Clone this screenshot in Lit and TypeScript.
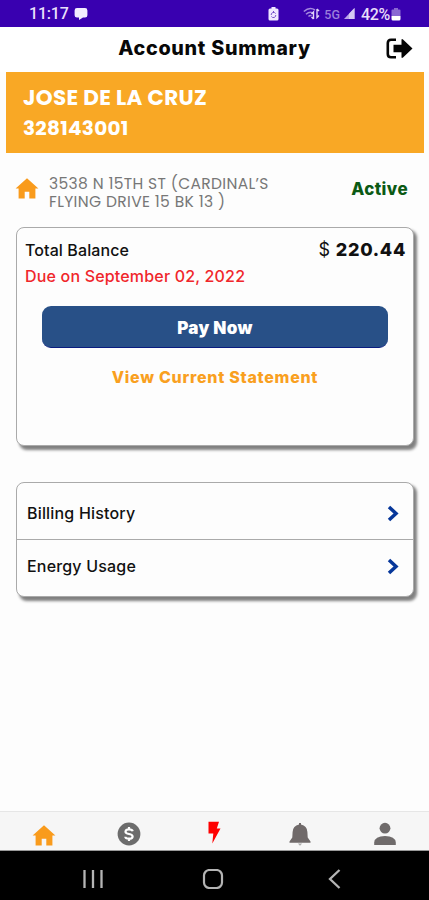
import { LitElement, html, css, svg } from "lit";
import { customElement } from "lit/decorators.js";

const homeShape = svg`<path d="M12 2.2 0.6 12.6h3V22.6h6.1v-6.8h4.6v6.8h6.1V12.6h3Z"/>`;

@customElement("status-bar")
class StatusBar extends LitElement {
  static styles = css`
    :host { display: flex; height: 26.5px; background: #3900b0; color: #e8defa; align-items: center;
      font-family: Roboto, sans-serif; box-sizing: border-box; padding: 2px 28px 0 29px; }
    .time { font-size: 16px; line-height: 24px; font-weight: 500; width: 39px; letter-spacing: -0.2px; white-space: nowrap; }
    .chat { margin-left: 6px; }
    .spacer { flex: 1; }
    .saver { margin-right: 24px; }
    .net { font-size: 12.5px; font-weight: 500; color: #9b7edb; margin: 1px 4px 0 4px; }
    .pct { font-size: 16px; font-weight: 500; margin: 0 1px 0 6px; letter-spacing: -0.3px; }
    svg { display: block; flex: none; }
  `;
  render() {
    return html`
      <span class="time">11:17</span>
      <svg class="chat" width="14" height="14" viewBox="0 0 14 14" fill="#f3edff"><path d="M3 1h8q2.4 0 2.4 2.4v4.800Q13.400 10.600 11 10.600H9L5 13V10.600H3Q.6 10.600 .6 8.200V3.400Q.6 1 3 1Z"/></svg>
      <span class="spacer"></span>
      <svg class="saver" width="11" height="14" viewBox="0 0 11 14"><path d="M3.500 0h4v1.500H9q1.500 0 1.500 1.500v9q0 1.500-1.500 1.500H2Q.5 13.500.5 12V3Q.5 1.500 2 1.500h1.500Z" fill="#efe7ff"/><path d="M3.200 8a2.400 2.400 0 0 1 4.400-1.500M7.800 8a2.400 2.400 0 0 1-4.400 1.500M5.500 4v2" fill="none" stroke="#7550c9"/></svg>
      <svg width="17" height="14" viewBox="0 0 17 14" fill="none"><path d="M.8 4.500Q6.500-.5 12 3M3 7.200Q6.500 4 9.500 5.800M5.500 9.500Q7 8 8.500 9" stroke="#a488df" stroke-width="1.500"/><path d="M10.500 12V5L8.500 7M14 2v8.500l2-2M10.500 12l-2-2M14 2l2 2" stroke="#e0d4f8" stroke-width="1.400"/></svg>
      <span class="net">5G</span>
      <svg width="11" height="12" viewBox="0 0 11 12"><path d="M0 11 10.500 0V11Z" fill="#b9a3e8"/><path d="M5 5.800 10.500 0V11H5Z" fill="#d7c9f4"/></svg>
      <span class="pct">42%</span>
      <svg width="10" height="13" viewBox="0 0 10 13"><path d="M3 0h4v1.500h1.500q1 0 1 1V8H.5V2.500q0-1 1-1H3Z" fill="#8a68d2"/><path d="M.5 8h9v3q0 1.500-1.500 1.500H2Q.5 12.500.5 11Z" fill="#fff"/></svg>
    `;
  }
}

@customElement("tab-bar")
class TabBar extends LitElement {
  static styles = css`
    :host { display: grid; grid-template-columns: repeat(5, 1fr); height: 40px; box-sizing: border-box;
      background: #f6f6f6; border-top: 1px solid #e6e6e6; border-bottom: 1px solid #999; padding: 0 1px 0 1px; }
    .tab { display: flex; justify-content: center; align-items: center; padding-top: 6px; }
    .tab:first-child { padding-top: 7px; }
    svg { display: block; }
  `;
  render() {
    return html`
      <div class="tab"><svg width="24" height="24" viewBox="0 0 24 24" fill="#f99b1c">${homeShape}</svg></div>
      <div class="tab"><svg width="24" height="24" viewBox="0 0 24 24"><circle cx="12" cy="12" r="11.400" fill="#6c6c6c"/><path d="M15.700 9.300Q15.200 7.400 12 7.400T8.500 9.700Q8.500 11.300 12 12T15.600 14.400Q15.600 16.700 12 16.700T8.300 14.700M12 5v2.400M12 16.700V19" fill="none" stroke="#fff" stroke-width="2.200"/></svg></div>
      <div class="tab"><svg width="24" height="26" viewBox="0 0 24 26" fill="#fe0000"><path d="M6.500 .8H17L14.800 7.400H18.500L10.300 22.500 11.300 12.400H6.500Z"/></svg></div>
      <div class="tab"><svg width="24" height="24" viewBox="0 0 24 24" fill="#706a6a"><path d="M11 1h2v1.600Q19 3.800 19.400 10L19.700 15.500 22.500 19.500V20.800H1.500V19.500L4.300 15.500 4.600 10Q5 3.800 11 2.600Z"/><path d="M9.800 21.500h4.400L12 23.700Z" fill="#aaa"/></svg></div>
      <div class="tab"><svg width="24" height="24" viewBox="0 0 24 24" fill="#6f6b6b"><circle cx="12" cy="6.200" r="5.400"/><path d="M1.200 23V20.500Q1.800 14 12 14T22.800 20.500V23Z"/></svg></div>
    `;
  }
}

@customElement("app-root")
class AppRoot extends LitElement {
  static styles = css`
    :host { display: flex; flex-direction: column; height: 900px; background: #fdfdfd; color: #111;
      font-family: Inter, "Liberation Sans", sans-serif; overflow: hidden; white-space: nowrap; }
    svg { display: block; flex: none; }
    .header { height: 45.500px; background: #fff; display: grid; grid-template-columns: 1fr auto 1fr; align-items: center; }
    .title { grid-column: 2; font-size: 19.800px; line-height: 26px; font-weight: 800; color: #080808; padding-bottom: 2px; letter-spacing: 0.700px; }
    .exit { justify-self: end; margin-right: 16px; padding-bottom: 2px; }
    .banner { margin: 0 5px 0 6px; height: 81px; box-sizing: border-box; background: #f9a825; color: #fff;
      padding: 11px 17px; font-family: Poppins, Inter, sans-serif; font-weight: 700; line-height: 30px; }
    .name { font-size: 21.500px; letter-spacing: 0.300px; }
    .acct { font-size: 20px; letter-spacing: 0.250px; }
    .place { display: flex; height: 74px; box-sizing: border-box; padding: 21px 21px 0 15px; }
    .house { margin-top: 2px; }
    .addr { margin-left: 10px; padding-top: 1px; font-family: Poppins, Inter, sans-serif; font-size: 15.500px; color: #777; flex: 1; letter-spacing: 0.350px; }
    .addr div { line-height: 18px; }
    .active { font-size: 17px; line-height: 24px; font-weight: 800; color: #0b5a14; padding-top: 3px; letter-spacing: 0.400px; }
    .card { margin: 0 15px 0 16px; box-sizing: border-box; border: 1px solid #aaa; border-radius: 8px; background: #fdfdfd;
      box-shadow: 3px 3.500px 3px #808080; flex: none; }
    .balance { height: 219px; padding: 9px 8px 0; display: flex; flex-direction: column; }
    .row { display: flex; justify-content: space-between; line-height: 26px; font-size: 16px; }
    .label { font-weight: 500; letter-spacing: 0.100px; }
    .sum { font-size: 18px; letter-spacing: 0.300px; margin-right: -1px; }
    .sum b { font-weight: 800; letter-spacing: 0.700px; }
    .due { font-size: 16px; line-height: 26px; color: #f0262b; font-weight: 500; letter-spacing: 0.180px; }
    .pay { margin: 17px 17px 0; height: 42px; box-sizing: border-box; border: 0; border-bottom: 1px solid #0a1c80; border-radius: 9px;
      background: #285087; color: #fff; font: 900 17px/26px Inter, sans-serif; padding: 2px 0 0; letter-spacing: 0.350px; }
    .view { text-align: center; font-size: 16px; line-height: 26px; font-weight: 850; color: #f9a01f; margin-top: 16px; letter-spacing: 0.720px; }
    .links { margin-top: 36px; height: 115px; }
    .link { display: flex; height: 56px; align-items: center; justify-content: space-between; padding: 5px 14px 0 10px; box-sizing: border-box;
      font-size: 16px; font-weight: 500; letter-spacing: 0.180px; }
    .link span { padding-bottom: 1.500px; }
    .link + .link { border-top: 1px solid #aaa; padding-top: 0; padding-bottom: 3px; }
    .link + .link span { padding-bottom: 0; }
    .fill { flex: 1; }
    .sysnav { height: 49px; background: #000; display: flex; align-items: center; padding: 7px 0 0 82px; box-sizing: border-box; }
    .homekey { margin-left: 98px; }
    .backkey { margin-left: 104px; }
  `;
  private chevron() {
    return html`<svg width="12" height="17" viewBox="0 0 12 17"><path d="M2 2 9 8.500 2 15" fill="none" stroke="#07379a" stroke-width="3.500"/></svg>`;
  }
  render() {
    return html`
      <status-bar></status-bar>
      <div class="header">
        <div class="title">Account Summary</div>
        <svg class="exit" width="27" height="21" viewBox="0 0 27 21"><path d="M10 1.800H5Q1.800 1.800 1.800 5v11Q1.800 19.200 5 19.200h5" fill="none" stroke="#050505" stroke-width="2.600"/><path d="M7.500 6.700H15.500V2Q15.500 .3 17 1.400L26.500 10.500 17 19.600Q15.500 20.700 15.500 19V14.300H7.500Z" fill="#050505"/></svg>
      </div>
      <div class="banner"><div class="name">JOSE DE LA CRUZ</div><div class="acct">328143001</div></div>
      <div class="place">
        <svg class="house" width="24" height="24" viewBox="0 0 24 24" fill="#f99b1c">${homeShape}</svg>
        <div class="addr"><div>3538 N 15TH ST (CARDINAL’S</div><div>FLYING DRIVE 15 BK 13 )</div></div>
        <div class="active">Active</div>
      </div>
      <div class="card balance">
        <div class="row"><span class="label">Total Balance</span><span class="sum">$ <b>220.44</b></span></div>
        <div class="due">Due on September 02, 2022</div>
        <button class="pay">Pay Now</button>
        <div class="view">View Current Statement</div>
      </div>
      <div class="card links">
        <div class="link"><span>Billing History</span>${this.chevron()}</div>
        <div class="link"><span>Energy Usage</span>${this.chevron()}</div>
      </div>
      <div class="fill"></div>
      <tab-bar></tab-bar>
      <div class="sysnav">
        <svg width="22" height="20" viewBox="0 0 22 20"><path d="M2.500 1v18M11 1v18M19.500 1v18" stroke="#b4b4b4" stroke-width="2.300"/></svg>
        <svg class="homekey" width="22" height="20" viewBox="0 0 22 20"><rect x="2" y="1" width="18" height="18" rx="5.500" fill="none" stroke="#b4b4b4" stroke-width="2.200"/></svg>
        <svg class="backkey" width="13" height="20" viewBox="0 0 13 20"><path d="M11.500 1 2 10l9.500 9" fill="none" stroke="#b4b4b4" stroke-width="2.300"/></svg>
      </div>
    `;
  }
}
